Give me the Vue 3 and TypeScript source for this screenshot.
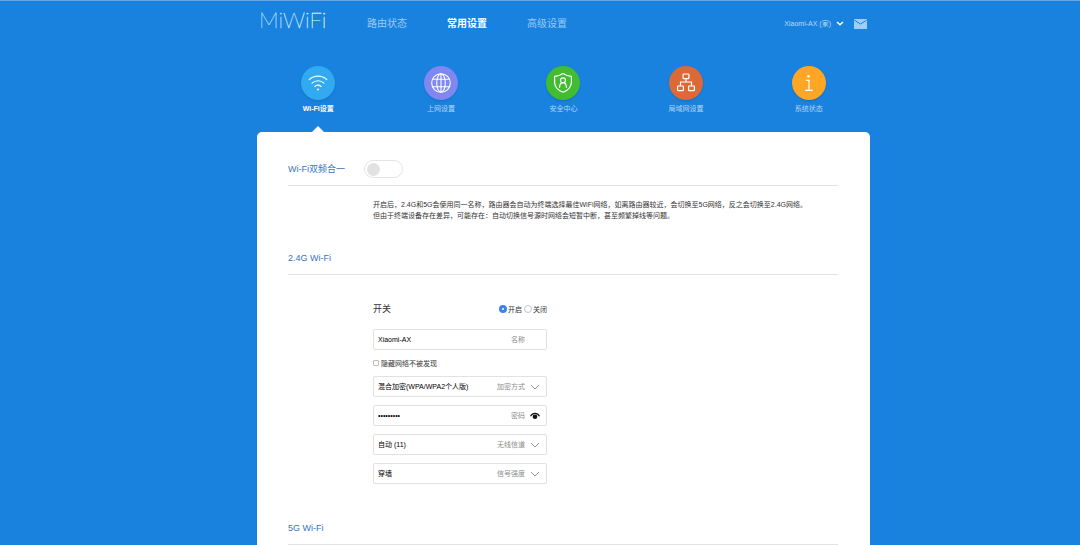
<script setup lang="ts">
import { ref } from 'vue'

type TabIcon = 'wifi' | 'globe' | 'shield' | 'lan' | 'info'

interface Tab {
  icon: TabIcon
  label: string
}

const navItems: string[] = ['路由状态', '常用设置', '高级设置']
const activeNav = ref(1)

const tabs: Tab[] = [
  { icon: 'wifi', label: 'Wi-Fi设置' },
  { icon: 'globe', label: '上网设置' },
  { icon: 'shield', label: '安全中心' },
  { icon: 'lan', label: '局域网设置' },
  { icon: 'info', label: '系统状态' },
]
const activeTab = ref(0)

const merged = ref(false)
const power = ref('on')
const ssid = ref('Xiaomi-AX')
const hidden = ref(false)
const encryption = ref('混合加密(WPA/WPA2个人版)')
const password = ref('miwifi123')
const showPassword = ref(false)
const channel = ref('自动 (11)')
const strength = ref('穿墙')
</script>

<template>
  <div class="page">
    <div class="shell">
      <header class="topbar">
        <a class="logo" href="#" aria-label="MiWiFi">
          <svg width="76" height="32" viewBox="0 0 76 32">
            <defs>
              <linearGradient id="logo-fade" x1="0" x2="1" y1="0" y2="0">
                <stop offset="0" stop-color="#b5d8f8" />
                <stop offset="1" stop-color="#ffffff" />
              </linearGradient>
            </defs>
            <text x="0" y="22" class="logo-text" fill="url(#logo-fade)" stroke="url(#logo-fade)">MiWiFi</text>
          </svg>
        </a>
        <nav class="nav">
          <a
            v-for="(item, i) in navItems"
            :key="item"
            href="#"
            :class="{ active: i === activeNav }"
            @click.prevent="activeNav = i"
          >{{ item }}</a>
        </nav>
        <div class="account">
          <button class="router" type="button">
            <span>Xiaomi-AX (家)</span>
            <svg width="8" height="5" viewBox="0 0 8 5">
              <path d="M1 1l3 2.700L7 1" fill="none" stroke="#fff" stroke-width="1.500" />
            </svg>
          </button>
          <button class="mail" type="button" aria-label="消息">
            <svg width="13" height="10" viewBox="0 0 13 10">
              <rect width="13" height="10" rx="0.600" fill="#9fcdf5" />
              <path d="M0.500 1.200l6 3.900 6-3.900" fill="none" stroke="#1982df" stroke-width="1" />
            </svg>
          </button>
        </div>
      </header>

      <div class="tabs">
        <a
          v-for="(tab, i) in tabs"
          :key="tab.icon"
          href="#"
          class="tab"
          :class="{ active: i === activeTab }"
          @click.prevent="activeTab = i"
        >
          <span class="disc" :class="tab.icon">
            <svg width="34" height="34" viewBox="0 0 34 34" fill="none" stroke="#fff">
              <g v-if="tab.icon === 'wifi'" stroke-width="1.100" stroke-linecap="round">
                <path d="M8.200 13.600c5-4.600 12.600-4.600 17.600 0" />
                <path d="M11 17.100c3.500-3.200 8.500-3.200 12 0" />
                <path d="M13.900 20.500c1.900-1.600 4.300-1.600 6.200 0" />
                <circle cx="17" cy="23.600" r="1" fill="#fff" stroke="none" />
              </g>
              <g v-else-if="tab.icon === 'globe'" stroke-width="1.100">
                <circle cx="17" cy="17" r="9.300" />
                <ellipse cx="17" cy="17" rx="4.300" ry="9.300" />
                <path d="M17 7.700v18.600M8.600 13.200h16.800M8.600 20.800h16.800" />
              </g>
              <g v-else-if="tab.icon === 'shield'" stroke-width="1.200" stroke-linejoin="round">
                <path d="M17 7.500c2.500 1.700 5.200 2.600 8.400 2.800v5.700c0 4.800-3.200 8.300-8.400 10.300-5.200-2-8.400-5.500-8.400-10.300v-5.700c3.200-.2 5.900-1.100 8.400-2.800z" />
                <circle cx="17" cy="14.300" r="2.500" />
                <path d="M13.600 21.300c.1-2.900 1.400-4.700 3.400-4.700s3.300 1.800 3.400 4.700" stroke-linecap="round" />
              </g>
              <g v-else-if="tab.icon === 'lan'" stroke-width="1.200">
                <rect x="14.100" y="8" width="5.800" height="4.600" rx="0.600" />
                <rect x="8.600" y="20" width="5.800" height="4.600" rx="0.600" />
                <rect x="19.600" y="20" width="5.800" height="4.600" rx="0.600" />
                <path d="M17 12.600v3.400M11.500 20v-4h11v4" />
              </g>
              <g v-else stroke-width="1.200">
                <circle cx="16.600" cy="10.300" r="1.300" fill="#fff" stroke="none" />
                <path d="M13.800 14.300h3.200v10M13.200 24.300h7.600" />
              </g>
            </svg>
          </span>
          <span class="tab-label">{{ tab.label }}</span>
        </a>
      </div>

      <main class="panel">
        <section>
          <div class="heading">
            <h2 id="merge-title">Wi-Fi双频合一</h2>
            <input v-model="merged" class="toggle" type="checkbox" role="switch" aria-labelledby="merge-title">
          </div>
          <p class="note">
            开启后，2.4G和5G会使用同一名称，路由器会自动为终端选择最佳WiFi网络，如离路由器较近，会切换至5G网络，反之会切换至2.4G网络。<br>
            但由于终端设备存在差异，可能存在：自动切换信号源时网络会短暂中断，甚至频繁掉线等问题。
          </p>
        </section>

        <section class="band">
          <div class="heading"><h2>2.4G Wi-Fi</h2></div>
          <form class="form" @submit.prevent>
            <div class="switch-row" role="radiogroup" aria-labelledby="power-title">
              <span id="power-title" class="switch-title">开关</span>
              <label><input v-model="power" type="radio" name="power" value="on">开启</label>
              <label><input v-model="power" type="radio" name="power" value="off">关闭</label>
            </div>

            <div class="field">
              <input id="ssid" v-model="ssid" type="text">
              <label for="ssid">名称</label>
              <span class="mark"></span>
            </div>

            <label class="check">
              <input v-model="hidden" type="checkbox">隐藏网络不被发现
            </label>

            <div class="stack">
              <div class="field">
                <select id="encryption" v-model="encryption">
                  <option>混合加密(WPA/WPA2个人版)</option>
                </select>
                <label for="encryption">加密方式</label>
                <svg class="mark" viewBox="0 0 10 8"><path d="M1 2l4 4 4-4" /></svg>
              </div>
              <div class="field">
                <input id="password" v-model="password" :type="showPassword ? 'text' : 'password'">
                <label for="password">密码</label>
                <button class="mark" type="button" aria-label="显示密码" @click="showPassword = !showPassword">
                  <svg width="10" height="8" viewBox="0 0 10 8">
                    <path class="lid" d="M0.500 4.300C2.600 0.500 7.400 0.500 9.500 4.300" />
                    <circle cx="5" cy="4.700" r="2.300" fill="#111" />
                  </svg>
                </button>
              </div>
              <div class="field">
                <select id="channel" v-model="channel">
                  <option>自动 (11)</option>
                </select>
                <label for="channel">无线信道</label>
                <svg class="mark" viewBox="0 0 10 8"><path d="M1 2l4 4 4-4" /></svg>
              </div>
              <div class="field">
                <select id="strength" v-model="strength">
                  <option>穿墙</option>
                </select>
                <label for="strength">信号强度</label>
                <svg class="mark" viewBox="0 0 10 8"><path d="M1 2l4 4 4-4" /></svg>
              </div>
            </div>
          </form>
        </section>

        <section class="band-5g">
          <div class="heading"><h2>5G Wi-Fi</h2></div>
        </section>
      </main>
    </div>
  </div>
</template>

<style>
body {
  background: #1982df;
}
</style>

<style scoped>
.page,
.page * {
  box-sizing: border-box;
}

.page {
  display: grid;
  grid-template-columns: 257fr minmax(560px, 613fr) 210fr;
  min-height: 100vh;
  border-top: 1px solid #66a6e3;
  background: #1982df;
  color: #333;
  font: 7px/11px "Liberation Sans", "Noto Sans CJK SC", sans-serif;
}

.page button,
.page input,
.page select {
  margin: 0;
  padding: 0;
  border: 0;
  background: none;
  font: inherit;
  color: inherit;
}

a {
  color: inherit;
  text-decoration: none;
}

.shell {
  grid-column: 2;
  display: flex;
  flex-direction: column;
}

.topbar {
  display: flex;
  align-items: center;
  height: 45px;
  padding: 0 3px 0 2px;
}

.logo {
  width: 108px;
  height: 36px;
}

.logo svg {
  display: block;
}

.logo-text {
  font-family: Lato, "Liberation Sans", sans-serif;
  font-size: 22px;
  font-weight: 100;
  stroke-width: 0.3;
}

.nav {
  display: flex;
  flex: 1;
  gap: 40px;
  font-size: 10px;
  line-height: 14px;
  color: #9dc9f3;
}

.nav .active {
  color: #fff;
  font-weight: bold;
}

.account {
  display: flex;
  align-items: center;
  gap: 10px;
  color: #bcdaf6;
}

.account .router {
  display: flex;
  align-items: center;
  gap: 5px;
}

.account svg {
  display: block;
}

.tabs {
  display: grid;
  grid-template-columns: repeat(5, 1fr);
  padding-top: 20px;
}

.tab {
  position: relative;
  display: flex;
  flex-direction: column;
  align-items: center;
  padding-bottom: 18px;
  color: #b3d5f5;
}

.tab.active {
  color: #fff;
  font-weight: bold;
}

.tab.active::after {
  content: "";
  position: absolute;
  bottom: 0;
  border: 6px solid transparent;
  border-top: 0;
  border-bottom-color: #fff;
}

.disc {
  width: 34px;
  height: 34px;
  border-radius: 50%;
  box-shadow: 0 1px 2px rgba(0, 0, 0, 0.15);
}

.disc svg {
  display: block;
}

.disc.wifi { background: #31aaf2; }
.disc.globe { background: #7f87f0; }
.disc.shield { background: #42bd31; }
.disc.lan { background: #dc6938; }
.disc.info { background: #ffa724; }

.tab-label {
  margin-top: 4px;
  line-height: 10px;
}

.panel {
  flex: 1;
  padding: 27px 32px 0 31px;
  border-radius: 5px 5px 0 0;
  background: #fff;
}

.heading {
  display: flex;
  align-items: center;
  gap: 19px;
  height: 27px;
  padding-bottom: 6px;
  border-bottom: 1px solid #e3e3e3;
}

h2 {
  margin: 0;
  font-size: 9px;
  font-weight: normal;
  line-height: 14px;
  color: #3474c4;
}

.page .toggle {
  appearance: none;
  display: flex;
  align-items: center;
  width: 39px;
  height: 18px;
  padding: 0 2px;
  border: 1px solid #e4e4e4;
  border-radius: 9px;
}

.toggle::before {
  content: "";
  width: 13px;
  height: 13px;
  border-radius: 50%;
  background: #e2e2e2;
}

.page .toggle:checked {
  justify-content: flex-end;
  background: #3b8cf5;
}

.note {
  margin: 13px 0 0;
  padding-left: 85px;
  color: #333;
}

.band {
  margin-top: 27px;
}

.band-5g {
  margin-top: 34px;
}

.form {
  width: 174px;
  margin: 28px 0 0 85px;
}

.switch-row {
  display: flex;
  align-items: center;
  gap: 2px;
  height: 12px;
  margin-bottom: 14px;
}

.switch-title {
  flex: 1;
  font-size: 9px;
}

.switch-row label,
.check {
  display: flex;
  align-items: center;
  gap: 1px;
}

.page input[type="radio"] {
  appearance: none;
  width: 8px;
  height: 8px;
  border: 1px solid #c4c4c4;
  border-radius: 50%;
  background: #fff;
}

.page input[type="radio"]:checked {
  border: 3px solid #3a84f7;
}

.check {
  gap: 2px;
  height: 12px;
  margin: 7px 0;
}

.check input {
  appearance: none;
  width: 6px;
  height: 6px;
}

.page .check input {
  border: 1px solid #bdbdbd;
  border-radius: 1px;
}

.page .check input:checked {
  background: #3a84f7;
}

.stack {
  display: flex;
  flex-direction: column;
  gap: 8px;
}

.field {
  display: flex;
  align-items: center;
  height: 21px;
  padding: 0 6px 0 4px;
  border: 1px solid #e2e2e2;
  border-radius: 2px;
}

.page .field input,
.page .field select {
  appearance: none;
  flex: 1;
  min-width: 0;
  height: 19px;
  color: #000;
  outline: 0;
}

.field label {
  color: #8c8c8c;
}

.field .mark {
  flex: none;
  width: 10px;
  height: 8px;
  margin-left: 5px;
}

.field .mark path {
  fill: none;
  stroke: #999;
  stroke-width: 1;
}

.field .mark svg {
  display: block;
}

.field .mark .lid {
  stroke: #111;
  stroke-width: 1.2;
}
</style>
